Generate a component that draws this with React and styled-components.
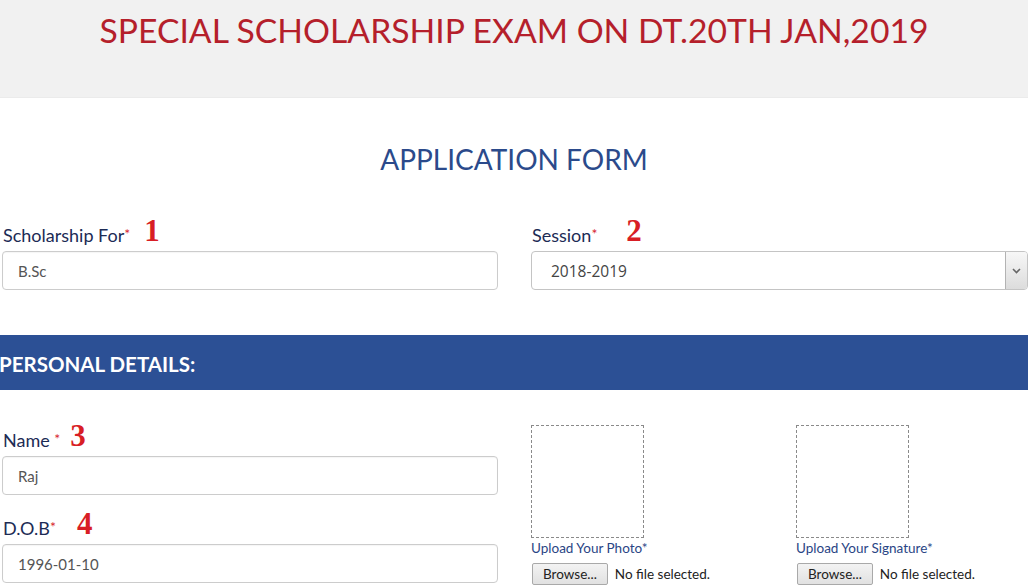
import React from 'react';
import styled, { createGlobalStyle } from 'styled-components';

const GlobalStyle = createGlobalStyle`
    html, body {
        margin: 0;
        padding: 0;
        background: #fff;
        font-family: Lato, 'Open Sans', sans-serif;
    }
    * {
        box-sizing: border-box;
    }
`;

const Page = styled.div`
    width: 1028px;
    height: 587px;
    overflow: hidden;
`;

const Banner = styled.header`
    height: 98px;
    background-color: #f1f1f1;
    border-bottom: 1px solid #ebebeb;
    padding-top: 10px;
    text-align: center;

    h1 {
        margin: 0;
        font-size: 33.7px;
        font-weight: 400;
        color: #b51f2b;
    }
`;

const FormTitle = styled.h2`
    margin: 44px 0 0;
    height: 38px;
    text-align: center;
    font-size: 28px;
    font-weight: 400;
    color: #2b4a8b;
`;

const Row = styled.div`
    display: grid;
    grid-template-columns: 496px 497px;
    column-gap: 33px;
    padding-left: 2px;
    margin-top: ${p => p.top || 0}px;
`;

const Field = styled.div`
    margin-bottom: ${p => p.bottom || 0}px;
`;

const LabelRow = styled.div`
    display: flex;
    align-items: flex-end;
    height: 31px;
    margin-bottom: 6px;
`;

const Label = styled.label`
    font-size: 18px;
    color: #1c2b55;
    padding-left: 1px;
    line-height: 20px;

    span {
        color: #d7262f;
        font-size: 14px;
        vertical-align: 3px;
    }
`;

const Marker = styled.b`
    margin-left: ${p => p.gap}px;
    font-family: 'Liberation Serif', 'DejaVu Serif', serif;
    font-size: 31px;
    font-weight: 700;
    color: #d81e25;
    line-height: 28px;
`;

const TextBox = styled.div`
    height: 39px;
    border: 1px solid #cccccc;
    border-radius: 4px;
    padding: 0 15px;
    display: flex;
    align-items: center;
    font-size: 15px;
    color: #555;
    box-shadow: inset 0 1px 1px rgba(0, 0, 0, 0.04);
`;

const SelectBox = styled.div`
    height: 39px;
    border: 1px solid #c4c4c4;
    border-radius: 4px;
    display: flex;
    align-items: stretch;
    overflow: hidden;

    .value {
        flex: 1;
        display: flex;
        align-items: center;
        padding-left: 19px;
        font-family: 'Open Sans', Lato, sans-serif;
        font-size: 15.5px;
        color: #444;
    }

    .arrow {
        width: 22px;
        border-left: 1px solid #b3b3b3;
        background: linear-gradient(#f7f7f7, #dcdcdc);
        display: flex;
        align-items: center;
        justify-content: center;
    }
`;

const SectionBar = styled.div`
    margin-top: 45px;
    height: 55px;
    background-color: #2c5095;
    display: flex;
    align-items: center;
    padding-top: 2px;

    h3 {
        margin: 0;
        margin-left: -1px;
        font-size: 20.5px;
        font-weight: 700;
        color: #fff;
    }
`;

const Uploads = styled.div`
    display: flex;
    gap: 152px;
    padding-top: 35px;
`;

const Upload = styled.div`
    width: 113px;

    .preview {
        width: 113px;
        height: 113px;
        border: 1px dashed #8a8a8a;
    }

    .caption {
        margin-top: 2px;
        font-size: 13.5px;
        color: #2a4585;
        white-space: nowrap;
    }
`;

const FileInput = styled.div`
    display: flex;
    align-items: center;
    gap: 7px;
    margin-top: 7px;
    white-space: nowrap;
    font-size: 13.5px;
    color: #222;

    button {
        height: 22px;
        padding: 0 10px;
        border: 1px solid #a9a9a9;
        border-radius: 2px;
        background: linear-gradient(#f3f3f3, #e1e1e1);
        font-family: Lato, sans-serif;
        font-size: 13.5px;
        color: #222;
        margin-left: 1px;
    }
`;

const App = () => {
    return (
        <Page>
            <GlobalStyle />
            <Banner>
                <h1>SPECIAL SCHOLARSHIP EXAM ON DT.20TH JAN,2019</h1>
            </Banner>

            <FormTitle>APPLICATION FORM</FormTitle>

            <Row top={34}>
                <Field>
                    <LabelRow>
                        <Label>Scholarship For<span>*</span></Label>
                        <Marker gap={14}>1</Marker>
                    </LabelRow>
                    <TextBox>B.Sc</TextBox>
                </Field>
                <Field>
                    <LabelRow>
                        <Label>Session<span>*</span></Label>
                        <Marker gap={29}>2</Marker>
                    </LabelRow>
                    <SelectBox>
                        <div className='value'>2018-2019</div>
                        <div className='arrow'>
                            <svg width='9' height='6' viewBox='0 0 9 6'>
                                <path d='M1 1 L4.5 4.5 L8 1' fill='none' stroke='#666' strokeWidth='1.6' />
                            </svg>
                        </div>
                    </SelectBox>
                </Field>
            </Row>

            <SectionBar>
                <h3>PERSONAL DETAILS:</h3>
            </SectionBar>

            <Row top={0}>
                <div style={{ paddingTop: 29 }}>
                    <Field bottom={12}>
                        <LabelRow>
                            <Label>Name <span>*</span></Label>
                            <Marker gap={10}>3</Marker>
                        </LabelRow>
                        <TextBox>Raj</TextBox>
                    </Field>
                    <Field>
                        <LabelRow>
                            <Label>D.O.B<span>*</span></Label>
                            <Marker gap={21}>4</Marker>
                        </LabelRow>
                        <TextBox>1996-01-10</TextBox>
                    </Field>
                </div>
                <Uploads>
                    <Upload>
                        <div className='preview' />
                        <div className='caption'>Upload Your Photo*</div>
                        <FileInput>
                            <button>Browse...</button>
                            <span>No file selected.</span>
                        </FileInput>
                    </Upload>
                    <Upload>
                        <div className='preview' />
                        <div className='caption'>Upload Your Signature*</div>
                        <FileInput>
                            <button>Browse...</button>
                            <span>No file selected.</span>
                        </FileInput>
                    </Upload>
                </Uploads>
            </Row>
        </Page>
    );
};

export default App;
